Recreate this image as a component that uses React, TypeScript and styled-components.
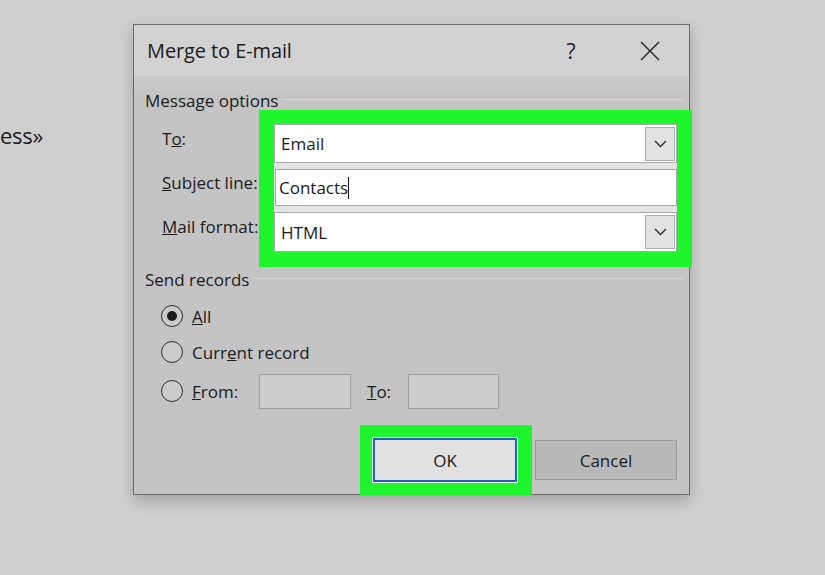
import React from "react";
import styled, { createGlobalStyle } from "styled-components";

const Colors = {
    page: "#cfcfcf",
    title: "#d2d2d2",
    body: "#c4c4c4",
    text: "#1b1b1b",
    frame: "#6a6a6a",
    field: "#a8a8a8",
    green: "#1ef52d",
    blue: "#1f62b8",
};

const GlobalStyle = createGlobalStyle`
    html, body {
        margin: 0;
        padding: 0;
        background: ${Colors.page};
    }
    body {
        font-family: "Open Sans", "Noto Sans", sans-serif;
        color: ${Colors.text};
    }
`;

export default function App() {
    return (
        <>
            <GlobalStyle />
            <Page>
                <DocColumn>
                    <DocText>ess»</DocText>
                </DocColumn>
                <Dialog>
                    <TitleBar>
                        <Title>Merge to E-mail</Title>
                        <TitleButton $width={80}>?</TitleButton>
                        <TitleButton $width={78}>
                            <svg width="20" height="20" viewBox="0 0 20 20">
                                <path d="M1 1 L19 19 M19 1 L1 19" stroke="#222" strokeWidth="1.4" fill="none" />
                            </svg>
                        </TitleButton>
                    </TitleBar>
                    <Body>
                        <GroupHeader $top={16}>Message options</GroupHeader>
                        <OptionsRow>
                            <Labels>
                                <Label>
                                    T<u>o</u>:
                                </Label>
                                <Label>
                                    <u>S</u>ubject line:
                                </Label>
                                <Label>
                                    <u>M</u>ail format:
                                </Label>
                            </Labels>
                            <Highlight>
                                <Fields>
                                    <Combo $height={39}>
                                        <FieldText>Email</FieldText>
                                        <DropButton>
                                            <Chevron />
                                        </DropButton>
                                    </Combo>
                                    <TextBox>
                                        <FieldText $pad={3}>Contacts</FieldText>
                                        <Caret />
                                    </TextBox>
                                    <Combo $height={40}>
                                        <FieldText>HTML</FieldText>
                                        <DropButton>
                                            <Chevron />
                                        </DropButton>
                                    </Combo>
                                </Fields>
                            </Highlight>
                        </OptionsRow>
                        <GroupHeader $top={4}>Send records</GroupHeader>
                        <RadioList>
                            <RadioRow>
                                <Radio $checked />
                                <RadioLabel>
                                    <u>A</u>ll
                                </RadioLabel>
                            </RadioRow>
                            <RadioRow>
                                <Radio />
                                <RadioLabel>
                                    Curr<u>e</u>nt record
                                </RadioLabel>
                            </RadioRow>
                            <RadioRow $pad={3}>
                                <Radio />
                                <RadioLabel $width={67}>
                                    <u>F</u>rom:
                                </RadioLabel>
                                <RangeBox $width={92} />
                                <RangeLabel>
                                    <u>T</u>o:
                                </RangeLabel>
                                <RangeBox $width={91} />
                            </RadioRow>
                        </RadioList>
                        <ButtonRow>
                            <ButtonHighlight>
                                <Button $primary>OK</Button>
                            </ButtonHighlight>
                            <Button>Cancel</Button>
                        </ButtonRow>
                    </Body>
                </Dialog>
            </Page>
        </>
    );
}

function Chevron() {
    return (
        <svg width="13" height="8" viewBox="0 0 13 8">
            <path d="M1 1 L6.5 6.5 L12 1" stroke="#2a2a2a" strokeWidth="1.3" fill="none" />
        </svg>
    );
}

const Page = styled.div`
    display: flex;
    width: 825px;
    height: 575px;
    overflow: hidden;
`;

const DocColumn = styled.div`
    width: 133px;
    flex-shrink: 0;
    padding-top: 120px;
`;

const DocText = styled.div`
    font-size: 22px;
    line-height: 30px;
    letter-spacing: -0.3px;
`;

const Dialog = styled.div`
    width: 555px;
    align-self: flex-start;
    margin-top: 24px;
    border: 1px solid ${Colors.frame};
    background: ${Colors.body};
    box-shadow: 0 6px 14px rgba(0, 0, 0, 0.22);
`;

const TitleBar = styled.div`
    display: flex;
    align-items: center;
    height: 51px;
    background: ${Colors.title};
`;

const Title = styled.div`
    flex: 1;
    padding-left: 13px;
    font-size: 20px;
    letter-spacing: -0.1px;
`;

const TitleButton = styled.div<{ $width: number }>`
    width: ${(p) => p.$width}px;
    height: 100%;
    display: flex;
    align-items: center;
    justify-content: center;
    font-size: 21px;
`;

const Body = styled.div`
    display: flex;
    flex-direction: column;
    background: linear-gradient(#cbcbcb, ${Colors.body} 20px);
`;

const GroupHeader = styled.div<{ $top: number }>`
    display: flex;
    align-items: center;
    gap: 4px;
    padding: ${(p) => p.$top}px 6px 0 11px;
    font-size: 17px;
    line-height: 18px;

    &::after {
        content: "";
        flex: 1;
        margin-top: -4px;
        border-top: 1px solid #d6d6d6;
    }
`;

const OptionsRow = styled.div`
    display: flex;
    padding-left: 28px;
    margin-right: -4px;
`;

const Labels = styled.div`
    width: 97px;
    padding-top: 14px;
    display: flex;
    flex-direction: column;
`;

const Label = styled.div`
    height: 44px;
    line-height: 30px;
    font-size: 17px;
    white-space: nowrap;
`;

const Highlight = styled.div`
    border: 15px solid ${Colors.green};
    border-top-width: 14px;
    background: #e4e4e4;
`;

const Fields = styled.div`
    width: 403px;
    display: flex;
    flex-direction: column;
    gap: 6px;
`;

const Combo = styled.div<{ $height: number }>`
    height: ${(p) => p.$height}px;
    box-sizing: border-box;
    display: flex;
    align-items: center;
    background: #fff;
    border: 1px solid ${Colors.field};
    padding-right: 1px;
`;

const TextBox = styled.div`
    height: 37px;
    box-sizing: border-box;
    margin-left: 1px;
    display: flex;
    align-items: center;
    background: #fff;
    border: 1px solid ${Colors.field};
`;

const FieldText = styled.span<{ $pad?: number }>`
    flex: ${(p) => (p.$pad ? "0 0 auto" : "1")};
    padding-left: ${(p) => p.$pad ?? 6}px;
    font-size: 17px;
`;

const Caret = styled.span`
    width: 1px;
    height: 22px;
    background: #111;
`;

const DropButton = styled.div`
    width: 30px;
    height: 34px;
    box-sizing: border-box;
    display: flex;
    align-items: center;
    justify-content: center;
    background: #e2e2e2;
    border: 1px solid #adadad;
`;

const RadioList = styled.div`
    display: flex;
    flex-direction: column;
    padding: 9px 0 0 27px;
`;

const RadioRow = styled.div<{ $pad?: number }>`
    display: flex;
    align-items: center;
    min-height: 36px;
    padding: ${(p) => p.$pad ?? 0}px 0;
`;

const Radio = styled.span<{ $checked?: boolean }>`
    width: 22px;
    height: 22px;
    box-sizing: border-box;
    border-radius: 50%;
    border: 1.5px solid #2e2e2e;
    background: #cbcbcb;
    margin-right: 9px;
    display: flex;
    align-items: center;
    justify-content: center;

    &::after {
        content: "";
        display: ${(p) => (p.$checked ? "block" : "none")};
        width: 10px;
        height: 10px;
        border-radius: 50%;
        background: #1c1c1c;
    }
`;

const RadioLabel = styled.span<{ $width?: number }>`
    font-size: 17px;
    width: ${(p) => (p.$width ? `${p.$width}px` : "auto")};
`;

const RangeBox = styled.div<{ $width: number }>`
    width: ${(p) => p.$width}px;
    height: 35px;
    box-sizing: border-box;
    background: #cdcdcd;
    border: 1px solid #9c9c9c;
`;

const RangeLabel = styled.span`
    width: 41px;
    margin-left: 16px;
    font-size: 17px;
`;

const ButtonRow = styled.div`
    display: flex;
    align-items: center;
    justify-content: flex-end;
    gap: 3px;
    margin-top: 13px;
    margin-bottom: -1px;
    padding-right: 12px;
`;

const ButtonHighlight = styled.div`
    border: 13px solid ${Colors.green};
    border-right-width: 15px;
`;

const Button = styled.div<{ $primary?: boolean }>`
    width: ${(p) => (p.$primary ? 144 : 142)}px;
    height: ${(p) => (p.$primary ? 44 : 40)}px;
    box-sizing: border-box;
    display: flex;
    align-items: center;
    justify-content: center;
    font-size: 17px;
    background: ${(p) => (p.$primary ? "#e1e1e1" : "#b9b9b9")};
    border: ${(p) => (p.$primary ? `2px solid ${Colors.blue}` : "1px solid #9a9a9a")};
    box-shadow: ${(p) => (p.$primary ? "0 0 0 1px #eef1f5" : "none")};
`;
